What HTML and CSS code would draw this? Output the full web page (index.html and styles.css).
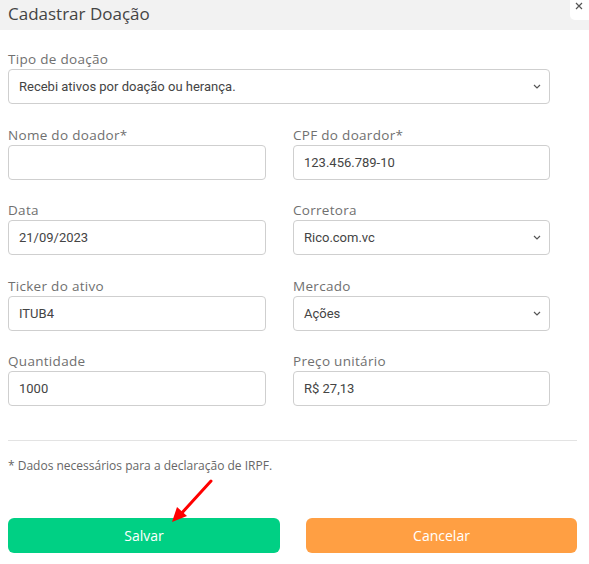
FILE: index.html
```html
<!DOCTYPE html>
<html lang="pt-BR">
<head>
<meta charset="utf-8">
<title>Cadastrar Doação</title>
<link rel="stylesheet" href="styles.css">
</head>
<body>
<div class="modal">
  <div class="modal-header">Cadastrar Doação</div>
  <button class="close-btn" type="button" aria-label="Fechar">
    <svg width="8" height="8" viewBox="0 0 8 8"><path d="M1 1L7 7M7 1L1 7" stroke="#555" stroke-width="1.2"/></svg>
  </button>
  <div class="modal-body">
    <div class="form-grid">
      <div class="field full">
        <label class="label">Tipo de doação</label>
        <div class="control select">Recebi ativos por doação ou herança.<svg class="chev" width="8" height="5" viewBox="0 0 8 5"><path d="M1 1L4 4L7 1" fill="none" stroke="#555" stroke-width="1.2"/></svg></div>
      </div>
      <div class="field">
        <label class="label">Nome do doador*</label>
        <div class="control"></div>
      </div>
      <div class="field">
        <label class="label">CPF do doardor*</label>
        <div class="control">123.456.789-10</div>
      </div>
      <div class="field">
        <label class="label">Data</label>
        <div class="control">21/09/2023</div>
      </div>
      <div class="field">
        <label class="label">Corretora</label>
        <div class="control select">Rico.com.vc<svg class="chev" width="8" height="5" viewBox="0 0 8 5"><path d="M1 1L4 4L7 1" fill="none" stroke="#555" stroke-width="1.2"/></svg></div>
      </div>
      <div class="field">
        <label class="label">Ticker do ativo</label>
        <div class="control">ITUB4</div>
      </div>
      <div class="field">
        <label class="label">Mercado</label>
        <div class="control select">Ações<svg class="chev" width="8" height="5" viewBox="0 0 8 5"><path d="M1 1L4 4L7 1" fill="none" stroke="#555" stroke-width="1.2"/></svg></div>
      </div>
      <div class="field">
        <label class="label">Quantidade</label>
        <div class="control">1000</div>
      </div>
      <div class="field">
        <label class="label">Preço unitário</label>
        <div class="control">R$ 27,13</div>
      </div>
    </div>
    <hr class="divider">
    <p class="note">* Dados necessários para a declaração de IRPF.</p>
    <div class="actions">
      <button class="btn btn-save" type="button">Salvar</button>
      <button class="btn btn-cancel" type="button">Cancelar</button>
    </div>
  </div>
  <svg class="arrow" width="60" height="60" viewBox="0 0 60 60">
    <path d="M51 3L20 37" stroke="#ff0000" stroke-width="3" stroke-linecap="round"/>
    <path d="M12 44L17 29L27 38Z" fill="#ff0000"/>
  </svg>
</div>
</body>
</html>
```
FILE: styles.css
```css
* { box-sizing: border-box; }
html, body { margin: 0; padding: 0; background: #fff; }
body { font-family: "Open Sans", "DejaVu Sans", sans-serif; color: #555; }
.modal { position: relative; width: 589px; height: 564px; background: #fff; }
.modal-header {
  height: 30px;
  background: #f2f2f2;
  padding-left: 8px;
  font-size: 17px;
  line-height: 28px;
  color: #444;
  font-weight: 400;
}
.close-btn {
  position: absolute;
  top: 0;
  right: 0;
  width: 19px;
  height: 20px;
  border: none;
  background: #fff;
  border-bottom-left-radius: 5px;
  padding: 2px 0 0 5px;
  display: flex;
  align-items: flex-start;
  justify-content: flex-start;
}
.modal-body { padding: 0 12px 0 8px; }
.form-grid {
  width: 542px;
  display: grid;
  grid-template-columns: 258px 257px;
  column-gap: 27px;
  row-gap: 22.5px;
  padding-top: 21px;
}
.field { display: flex; flex-direction: column; gap: 2px; }
.field.full { grid-column: 1 / -1; }
.label { font-size: 13.5px; line-height: 16px; color: #707070; letter-spacing: 0.3px; }
.control {
  height: 35px;
  border: 1px solid #cfcfcf;
  border-radius: 4px;
  padding: 0 10px;
  display: flex;
  align-items: center;
  font-family: Roboto, "Liberation Sans", sans-serif;
  font-size: 13px;
  color: #444;
}
.select { justify-content: space-between; padding-right: 8px; }
.chev { flex: none; }
.divider {
  width: 569px;
  margin: 34px 0 0 0;
  border: none;
  border-top: 1px solid #e3e3e3;
}
.note { margin: 17px 0 0 0; font-size: 12px; line-height: 16px; color: #666; }
.actions {
  display: grid;
  grid-template-columns: 272px 271px;
  column-gap: 26px;
  margin-top: 44px;
}
.btn {
  height: 35px;
  border: none;
  border-radius: 6px;
  color: #fff;
  font-family: "Open Sans", "DejaVu Sans", sans-serif;
  font-size: 14px;
}
.btn-save { background: #00d084; }
.btn-cancel { background: #ff9f43; }
.arrow { position: absolute; left: 160px; top: 478px; }
```
